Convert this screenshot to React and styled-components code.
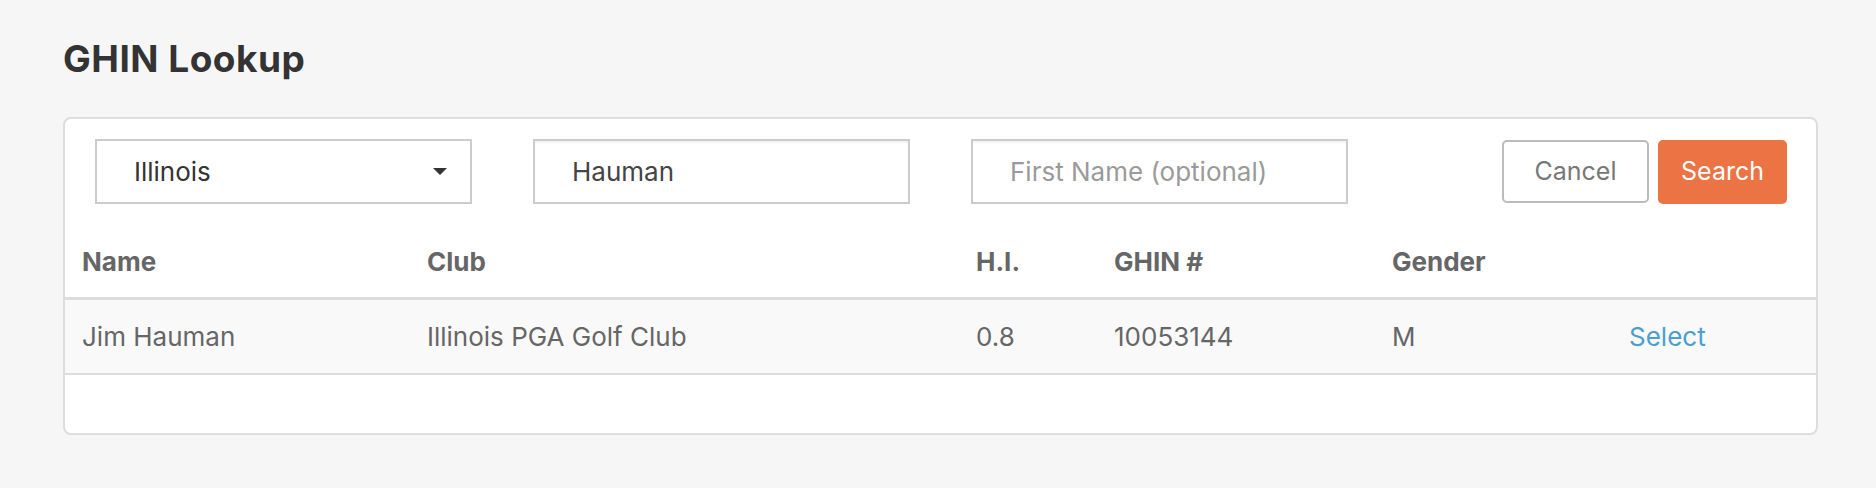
import React from 'react';
import styled, { createGlobalStyle } from 'styled-components';

const GlobalStyle = createGlobalStyle`
  html, body {
    margin: 0;
    padding: 0;
    background: #f6f6f6;
  }
  body {
    font-family: Inter, "Open Sans", sans-serif;
    color: #444;
  }
`;

const Page = styled.div`
  padding: 40px 58px 0 63px;
`;

const Title = styled.h1`
  margin: 0 0 40px 0;
  font-size: 37px;
  line-height: 1;
  font-weight: 700;
  color: #333;
  letter-spacing: 0.5px;
`;

const Card = styled.div`
  background: #fff;
  border: 2px solid #dddddd;
  border-radius: 8px;
  padding-bottom: 58px;
`;

const SearchBar = styled.div`
  display: flex;
  align-items: center;
  padding: 20px 29px 22px 30px;
  gap: 61px;
`;

const fieldBase = `
  box-sizing: border-box;
  width: 377px;
  height: 65px;
  border: 2px solid #cccccc;
  background: #fff;
  font: inherit;
  font-size: 26px;
  line-height: 1;
  padding: 0 0 0 37px;
`;

const SelectBox = styled.div`
  ${fieldBase}
  display: flex;
  align-items: center;
  justify-content: space-between;
  padding-right: 23px;
  color: #333;
`;

const Caret = styled.span`
  width: 0;
  height: 0;
  border-left: 7.5px solid transparent;
  border-right: 7.5px solid transparent;
  border-top: 7px solid #333;
`;

const TextInput = styled.input`
  ${fieldBase}
  color: #444;
  outline: none;
  box-shadow: inset 0 2px 2px rgba(0, 0, 0, 0.05);

  &::placeholder {
    color: #9a9a9a;
  }
`;

const Buttons = styled.div`
  display: flex;
  gap: 9px;
  margin-left: auto;
`;

const Button = styled.button`
  box-sizing: border-box;
  height: ${p => (p.primary ? '64px' : '63px')};
  padding: 0;
  width: ${p => (p.primary ? '129px' : '147px')};
  border-radius: 5px;
  border: 2px solid ${p => (p.primary ? '#ec7343' : '#bbbbbb')};
  background: ${p => (p.primary ? '#ec7343' : '#fff')};
  color: ${p => (p.primary ? '#fff' : '#777')};
  font-family: inherit;
  font-size: 25px;
  line-height: 1;
  cursor: pointer;
`;

const columns = '345px 549px 138px 278px 237px 1fr';

const HeaderRow = styled.div`
  display: grid;
  grid-template-columns: ${columns};
  align-items: center;
  height: 71px;
  border-bottom: 3px solid #dddddd;
`;

const DataRow = styled.div`
  display: grid;
  grid-template-columns: ${columns};
  align-items: center;
  height: 73px;
  background: #f9f9f9;
  border-bottom: 2px solid #dddddd;
`;

const Cell = styled.div`
  padding-left: 17px;
  font-size: 26px;
  line-height: 1;
  font-weight: ${p => (p.head ? 700 : 400)};
  color: #666;
`;

const SelectLink = styled.a`
  padding-left: 17px;
  font-size: 26px;
  line-height: 1;
  color: #4a9fd2;
  text-decoration: none;
  cursor: pointer;
`;

const headers = ['Name', 'Club', 'H.I.', 'GHIN #', 'Gender', ''];

const results = [
  { name: 'Jim Hauman', club: 'Illinois PGA Golf Club', hi: '0.8', ghin: '10053144', gender: 'M' },
];

export default function App() {
  return (
    <>
      <GlobalStyle />
      <Page>
        <Title>GHIN Lookup</Title>
        <Card>
          <SearchBar>
            <SelectBox>
              <span>Illinois</span>
              <Caret />
            </SelectBox>
            <TextInput defaultValue="Hauman" />
            <TextInput placeholder="First Name (optional)" />
            <Buttons>
              <Button>Cancel</Button>
              <Button primary>Search</Button>
            </Buttons>
          </SearchBar>
          <HeaderRow>
            {headers.map((h, i) => (
              <Cell head key={i}>{h}</Cell>
            ))}
          </HeaderRow>
          {results.map(r => (
            <DataRow key={r.ghin}>
              <Cell>{r.name}</Cell>
              <Cell>{r.club}</Cell>
              <Cell>{r.hi}</Cell>
              <Cell>{r.ghin}</Cell>
              <Cell>{r.gender}</Cell>
              <SelectLink>Select</SelectLink>
            </DataRow>
          ))}
        </Card>
      </Page>
    </>
  );
}
